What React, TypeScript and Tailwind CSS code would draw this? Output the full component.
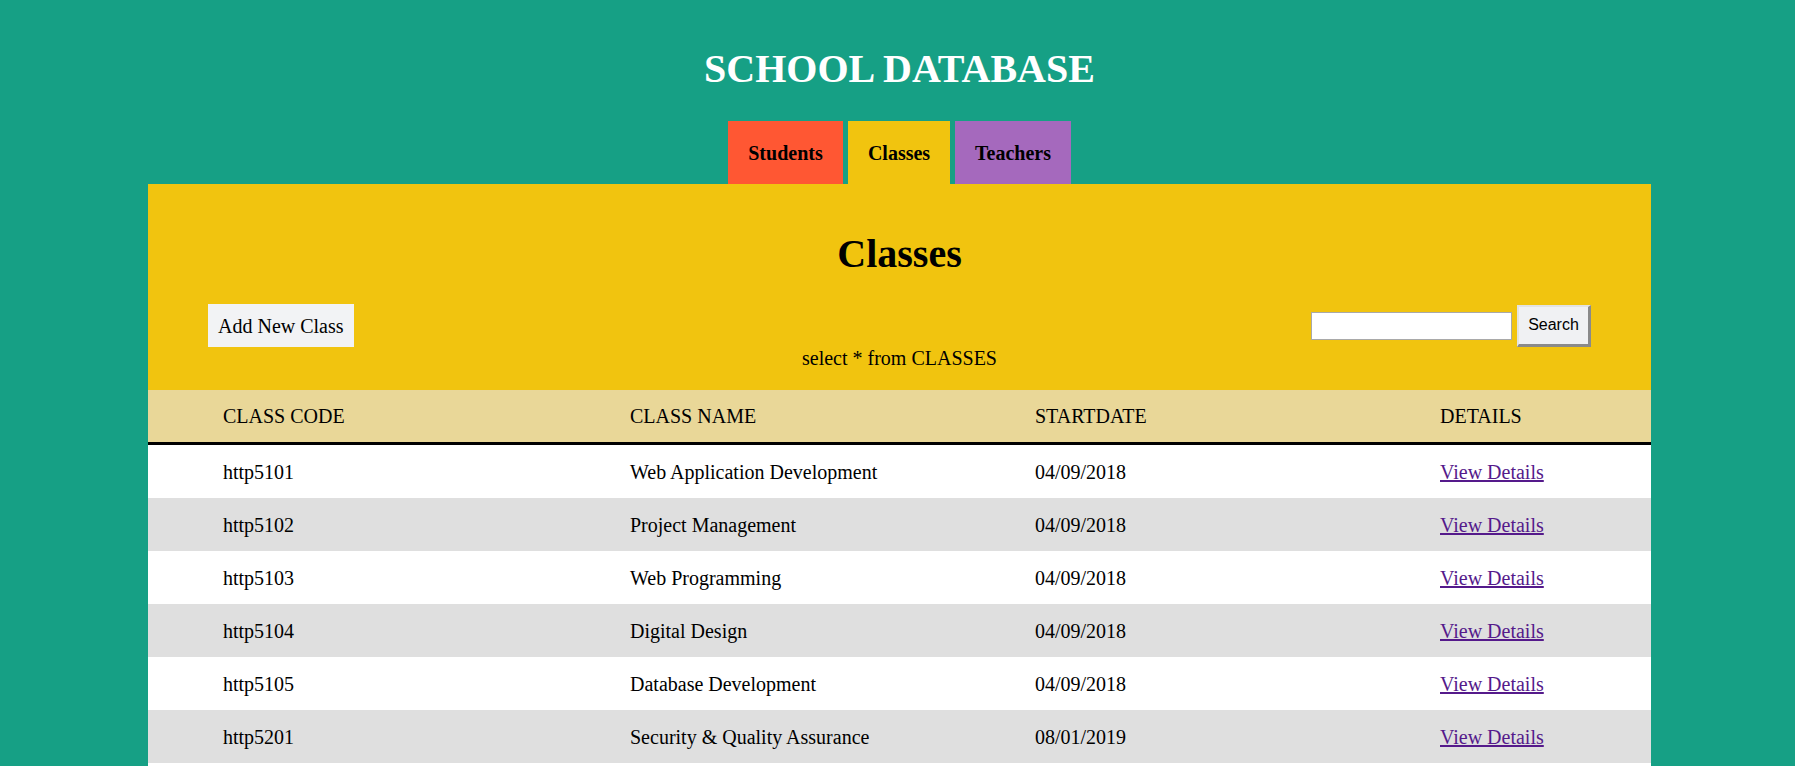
export default function App() {
  type SchoolClass = {
    code: string;
    name: string;
    start: string;
  };

  const classes: SchoolClass[] = [
    { code: "http5101", name: "Web Application Development", start: "04/09/2018" },
    { code: "http5102", name: "Project Management", start: "04/09/2018" },
    { code: "http5103", name: "Web Programming", start: "04/09/2018" },
    { code: "http5104", name: "Digital Design", start: "04/09/2018" },
    { code: "http5105", name: "Database Development", start: "04/09/2018" },
    { code: "http5201", name: "Security & Quality Assurance", start: "08/01/2019" },
  ];

  const tabs = [
    { label: "Students", bg: "bg-[#ff5733]", w: "w-[115px]" },
    { label: "Classes", bg: "bg-[#f1c40f]", w: "w-[102px]" },
    { label: "Teachers", bg: "bg-[#a569bd]", w: "w-[116px]" },
  ];

  return (
    <div className="h-[766px] overflow-hidden bg-[#16a085] font-['Liberation_Serif',serif] text-black">
      <div className="ml-[148px] w-[1503px]">
        {/* Title */}
        <h1 className="pt-[46px] text-center text-[40px] font-bold leading-[46px] text-white">
          SCHOOL DATABASE
        </h1>

        {/* Tabs */}
        <div className="mt-[29px] flex justify-center gap-[5px]">
          {tabs.map((tab) => (
            <div
              key={tab.label}
              className={`${tab.bg} ${tab.w} flex h-[63px] items-center justify-center text-[20px] font-bold`}
            >
              {tab.label}
            </div>
          ))}
        </div>

        {/* Panel */}
        <div className="bg-[#f1c40f]">
          <h2 className="pt-[47px] text-center text-[40px] font-bold leading-[46px]">
            Classes
          </h2>

          <div className="mt-[27px] flex items-center justify-between px-[60px]">
            <button className="h-[43px] bg-[#f2f3f5] px-[10px] text-[20px]">
              Add New Class
            </button>
            <div className="flex items-center gap-[5px]">
              <input
                type="text"
                className="h-[28px] w-[201px] border border-[#a9a9a9] bg-white"
              />
              <button className="h-[42px] w-[74px] border-t-2 border-l-2 border-r-[3px] border-b-[3px] border-t-[#e3e3e3] border-l-[#e3e3e3] border-r-[#8a8a8a] border-b-[#8a8a8a] bg-[#f0f1f3] font-['Liberation_Sans',sans-serif] text-[16px]">
                Search
              </button>
            </div>
          </div>

          <p className="pb-[20px] text-center text-[20px] leading-[23px]">
            select * from CLASSES
          </p>

          {/* Table */}
          <div className="grid h-[55px] grid-cols-[407px_405px_405px_1fr] items-center border-b-[3px] border-black bg-[#e9d798] pl-[75px] text-[20px]">
            <div>CLASS CODE</div>
            <div>CLASS NAME</div>
            <div>STARTDATE</div>
            <div>DETAILS</div>
          </div>
          <div className="bg-white pb-[20px]">
            {classes.map((c, i) => (
              <div
                key={c.code}
                className={`grid h-[53px] grid-cols-[407px_405px_405px_1fr] items-center pl-[75px] text-[20px] ${
                  i % 2 === 0 ? "bg-white" : "bg-[#dfdfdf]"
                }`}
              >
                <div>{c.code}</div>
                <div>{c.name}</div>
                <div>{c.start}</div>
                <div>
                  <a href="#" className="text-[#551a8b] underline">
                    View Details
                  </a>
                </div>
              </div>
            ))}
          </div>
        </div>
      </div>
    </div>
  );
}
